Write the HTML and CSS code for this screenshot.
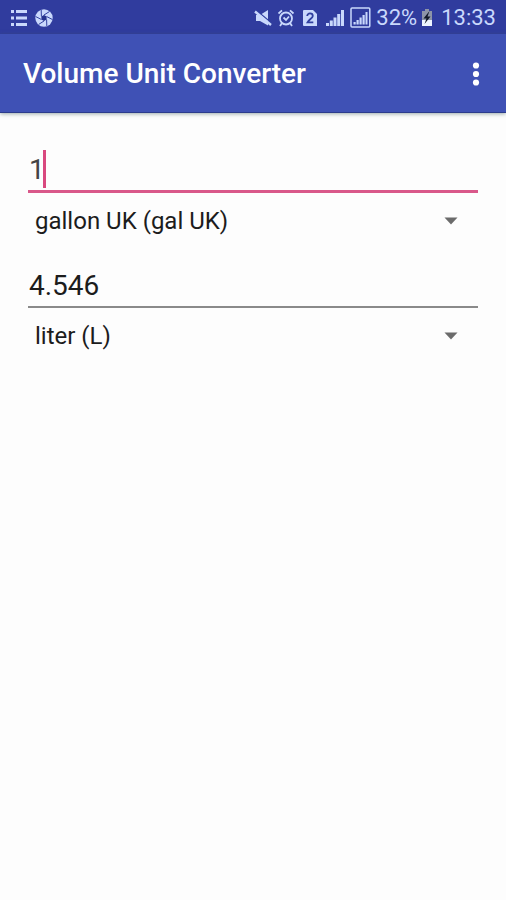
FILE: index.html
```html
<!DOCTYPE html>
<html lang="en">
<head>
<meta charset="utf-8">
<meta name="viewport" content="width=device-width, initial-scale=1">
<title>Volume Unit Converter</title>
<link rel="stylesheet" href="styles.css">
</head>
<body>
<div class="status">
  <div class="status-group status-left">
    <svg width="18" height="18" viewBox="0 0 18 18" fill="currentColor" aria-hidden="true">
      <path d="M1 1h3v3H1zM1 7.500h3v3H1zM1 14h3v3H1zM6 1h11v3H6zM6 7.500h11v3H6zM6 14h11v3H6z"/>
    </svg>
    <svg width="18" height="18" viewBox="0 0 18 18" aria-hidden="true">
      <circle cx="9" cy="9" r="8.700" fill="currentColor"/>
      <g stroke="#303f9f" stroke-width="1" fill="none">
        <path d="M9 6L14.500 2.500M11.600 7.500L17.400 10.500M11.600 10.500L11.800 17M9 12L3.500 15.500M6.400 10.500L.6 7.500M6.400 7.500L6.200 1"/>
      </g>
      <path d="M9 6l2.600 1.500v3L9 12l-2.600-1.500v-3z" fill="#26338f"/>
    </svg>
  </div>
  <div class="status-group status-icons">
    <svg width="18" height="18" viewBox="0 0 18 18" aria-hidden="true">
      <path d="M2 6h4l8-5v15.500l-8-4.500H2z" fill="currentColor"/>
      <path d="M2.500 1.500L18 14.500" stroke="#303f9f" stroke-width="1.400"/>
      <path d="M1 2.500L17 16" stroke="currentColor" stroke-width="2.400"/>
    </svg>
    <svg width="18" height="18" viewBox="0 0 18 18" fill="none" stroke="currentColor" stroke-width="1.800" aria-hidden="true">
      <circle cx="8" cy="9.500" r="6"/>
      <path d="M5.500 8.500L8 11l3-3.500M.5 4.500L4 1.300M15.500 4.500L12 1.300M4 14l-2 3M12 14l2 3"/>
    </svg>
    <svg width="18" height="18" viewBox="0 0 18 18" aria-hidden="true">
      <path d="M2 1h9l4 4v12H2a1 1 0 0 1-1-1V2a1 1 0 0 1 1-1z" fill="currentColor"/>
      <path d="M5.200 7C5.200 3.600 10.800 3.600 10.800 7C10.800 9 7 10.500 5.500 13.300H11.300" fill="none" stroke="#303f9f" stroke-width="1.800"/>
    </svg>
    <svg width="18" height="18" viewBox="0 0 18 18" fill="currentColor" aria-hidden="true">
      <path d="M0 14h3v3H0zM3.800 11.500h3V17h-3zM7.500 8.500h3V17h-3zM11.200 5h3v12h-3zM15 1h3v16h-3z"/>
    </svg>
    <svg width="22" height="22" viewBox="0 0 22 22" fill="currentColor" aria-hidden="true">
      <rect x="1" y="1" width="18.800" height="19" rx="1" fill="none" stroke="currentColor" stroke-width="1.500"/>
      <path d="M3.500 15h2.200v2.500H3.500zM6.500 13h2.200v4.500H6.500zM9.500 10.500h2.200v7H9.500zM12.500 8h2.200v9.500h-2.200zM15.500 5h2v12.500h-2z"/>
    </svg>
  </div>
  <span class="status-text">32%</span>
  <svg class="battery" width="12" height="18" viewBox="0 0 12 18" aria-hidden="true">
    <path d="M4 0h4v2h3v15H1V2h3z" fill="#8d94a8"/>
    <path d="M1 11h10v6H1z" fill="#eef5ff"/>
    <path d="M8.500 2L2.500 9.500H5.500L3.500 15L9.500 7.500H6.500z" fill="#111827"/>
  </svg>
  <time class="status-text">13:33</time>
</div>
<header class="appbar">
  <h1>Volume Unit Converter</h1>
  <button class="menu" type="button" aria-label="More options">
    <svg width="8" height="24" viewBox="0 0 8 24" fill="currentColor" aria-hidden="true">
      <circle cx="4" cy="3.500" r="3.100"/><circle cx="4" cy="12" r="3.100"/><circle cx="4" cy="20.500" r="3.100"/>
    </svg>
  </button>
</header>
<main class="converter">
  <div class="row">
    <div class="field">
      <input class="value active" type="text" inputmode="decimal" aria-label="Amount" value="1">
      <span class="caret"></span>
    </div>
    <div class="picker">
      <select class="unit" aria-label="From unit"><option>gallon UK (gal UK)</option><option>liter (L)</option></select>
      <svg class="arrow" width="14" height="8" viewBox="0 0 14 8" aria-hidden="true"><path d="M.5 .5h13L7 7.500z" fill="#6b6b6b"/></svg>
    </div>
  </div>
  <div class="row">
    <div class="field">
      <input class="value" type="text" inputmode="decimal" aria-label="Result" value="4.546">
    </div>
    <div class="picker">
      <select class="unit" aria-label="To unit"><option>liter (L)</option><option>gallon UK (gal UK)</option></select>
      <svg class="arrow" width="14" height="8" viewBox="0 0 14 8" aria-hidden="true"><path d="M.5 .5h13L7 7.500z" fill="#6b6b6b"/></svg>
    </div>
  </div>
</main>
</body>
</html>
```
FILE: styles.css
```css
* {
  box-sizing: border-box;
}

body {
  margin: 0;
  min-height: 100vh;
  background: #fdfdfd;
  color: #1c1c1c;
  font-family: Roboto, "Liberation Sans", sans-serif;
}

.status {
  display: flex;
  align-items: center;
  height: 34px;
  padding: 2px 10px 0;
  background: #303c9e;
  color: #c9d8fc;
}

.status svg {
  flex: none;
}

.status-group {
  display: flex;
  align-items: center;
}

.status-left {
  gap: 7px;
  margin-right: auto;
}

.status-icons {
  gap: 6px;
  margin-right: 4px;
}

.status-text {
  font-size: 22px;
  line-height: 34px;
}

.battery {
  margin: 0 8px 0 4px;
}

.appbar {
  display: flex;
  align-items: center;
  justify-content: space-between;
  height: 79px;
  padding: 2px 18px 0 23px;
  background: #3f51b5;
  border-bottom: 1px solid #2c3b8c;
  box-shadow: 0 1px 4px rgba(60, 90, 90, 0.5);
  color: #fff;
}

.appbar h1 {
  margin: 0;
  font-size: 28px;
  font-weight: 500;
  line-height: 36px;
}

.menu {
  display: flex;
  justify-content: center;
  width: 24px;
  padding: 0;
  border: 0;
  background: none;
  color: #fff;
}

.converter {
  display: flex;
  flex-direction: column;
  gap: 11px;
  padding: 32px 28px;
}

.field,
.picker {
  position: relative;
}

.value {
  display: block;
  width: 100%;
  height: 48px;
  padding: 4px 0 0 1px;
  border: 0;
  border-bottom: 2px solid #8a8a8a;
  border-radius: 0;
  outline: 0;
  background: none;
  color: inherit;
  font: 28px/40px Roboto, "Liberation Sans", sans-serif;
}

.value.active {
  border-bottom: 3px solid #d9588a;
  color: #444;
}

.caret {
  position: absolute;
  top: 5px;
  left: 15px;
  width: 3px;
  height: 38px;
  background: #d9487f;
}

.unit {
  display: block;
  width: 100%;
  height: 56px;
  padding: 0 40px 0 7px;
  border: 0;
  outline: 0;
  appearance: none;
  background: none;
  color: inherit;
  font: 24px/32px Roboto, "Liberation Sans", sans-serif;
}

.arrow {
  position: absolute;
  top: 24px;
  right: 20px;
  pointer-events: none;
}
```
